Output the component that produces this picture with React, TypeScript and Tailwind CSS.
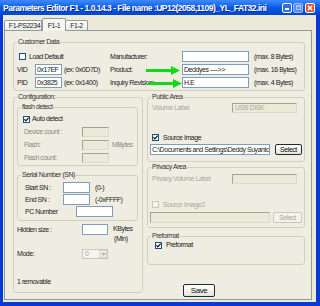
import React from "react";

type P = { className?: string; children?: React.ReactNode };

function Box({ className = "", children }: P) {
  return (
    <div
      className={`flex items-center overflow-hidden whitespace-nowrap border border-[#7F9DB9] bg-white px-[1px] text-[#222] ${className}`}
    >
      {children}
    </div>
  );
}

function DBox({ className = "", children }: P) {
  return (
    <div
      className={`flex items-center overflow-hidden whitespace-nowrap border border-[#A5A396] border-b-[#DCDAD0] border-r-[#DCDAD0] bg-[#ECE9D8] px-[2px] text-[#ACA899] ${className}`}
    >
      {children}
    </div>
  );
}

function Check({ checked = false, disabled = false }: { checked?: boolean; disabled?: boolean }) {
  return (
    <span
      className={
        disabled
          ? "flex h-[7px] w-[7px] shrink-0 items-center justify-center border border-[#C9C7BA] bg-[#F4F3EE]"
          : "flex h-[7px] w-[7px] shrink-0 items-center justify-center border border-[#1C5180] bg-white"
      }
    >
      {checked && (
        <svg width="5" height="5" viewBox="0 0 5 5">
          <path d="M0.4 2.2 L1.9 3.8 L4.6 0.7" fill="none" stroke="#1a1a1a" strokeWidth="1.2" />
        </svg>
      )}
    </span>
  );
}

function Btn({ className = "", children, disabled = false }: P & { disabled?: boolean }) {
  return (
    <div
      className={
        disabled
          ? `flex items-center justify-center rounded-[2px] border border-[#C9C7BA] bg-[#F4F3EE] text-[#ACA899] ${className}`
          : `flex items-center justify-center rounded-[2px] border border-[#1E2B3A] bg-linear-to-b from-white to-[#E6E4DA] text-[#111] ${className}`
      }
    >
      {children}
    </div>
  );
}

function Group({ legend, className = "", children }: P & { legend: string }) {
  return (
    <fieldset className={`rounded-[3px] border border-[#D0D0BF] ${className}`}>
      <legend className="ml-[3px] px-[1px] text-[7px] leading-[8px] text-[#333]">{legend}</legend>
      {children}
    </fieldset>
  );
}

function Arrow({ className = "" }: P) {
  return (
    <svg className={`absolute top-[1px] ${className}`} width="34" height="9" viewBox="0 0 34 9">
      <line x1="0" y1="4.5" x2="27" y2="4.5" stroke="#12D912" strokeWidth="3" />
      <polygon points="25,0 34,4.5 25,9" fill="#12D912" />
    </svg>
  );
}

function TitleBar() {
  return (
    <div className="flex h-[15px] items-center bg-linear-to-b from-[#3D8BFF] via-[#0A5AE6] to-[#0046D2] pl-[3px] pr-[5px]">
      <div className="min-w-0 flex-1 whitespace-nowrap text-[8.5px] font-bold leading-[10px] tracking-[-0.5px] text-white [text-shadow:1px_1px_0_#0A2A8A]">
        Parameters Editor F1 - 1.0.14.3 - File name :UP12(2058,1109)_YL_FAT32.ini
      </div>
      <div className="flex items-center gap-[1px]">
        <div className="flex h-[10px] w-[10px] items-end justify-center rounded-[2px] border border-white bg-[#2E6CF0] pb-[2px]">
          <div className="h-[2px] w-[4px] bg-white" />
        </div>
        <div className="flex h-[10px] w-[10px] items-center justify-center rounded-[2px] border border-[#9DB9F5] bg-[#5A8CF0]">
          <div className="h-[5px] w-[5px] border border-[#A8C2F8] border-t-2" />
        </div>
        <div className="ml-[1px] flex h-[10px] w-[10px] items-center justify-center rounded-[2px] border border-white bg-[#E0512B]">
          <svg width="6" height="6" viewBox="0 0 6 6">
            <path d="M0.8 0.8 L5.2 5.2 M5.2 0.8 L0.8 5.2" stroke="white" strokeWidth="1.4" />
          </svg>
        </div>
      </div>
    </div>
  );
}

export default function App() {
  return (
    <div className="flex h-[306px] w-[320px] flex-col overflow-hidden bg-[#0A3AD6] font-['Liberation_Sans',Arial,sans-serif] text-[7px] leading-[10px] tracking-[-0.45px] text-[#222]">
      <TitleBar />
      <div className="mb-[4px] ml-[3px] mr-[4px] flex flex-1 flex-col bg-[#ECE9D8]">
        {/* tabs */}
        <div className="flex h-[15px] items-end pl-[1px]">
          <div className="flex h-[10px] w-[38px] items-center justify-center rounded-t-[2px] border border-b-0 border-[#919B9C] bg-linear-to-b from-white to-[#ECEBE6] pl-[3px]">
            F1-PS2234
          </div>
          <div className="relative z-10 -mb-[1px] flex h-[13px] w-[24px] items-start justify-center rounded-t-[2px] border border-b-0 border-[#919B9C] bg-[#F7F6F1] pt-[2px]">
            F1-1
          </div>
          <div className="flex h-[10px] w-[22px] items-center justify-center rounded-t-[2px] border border-b-0 border-l-0 border-[#919B9C] bg-linear-to-b from-white to-[#ECEBE6]">
            F1-2
          </div>
        </div>
        {/* panel */}
        <div className="mb-[2px] ml-[1px] mr-[4px] flex flex-1 flex-col border border-[#919B9C] bg-[#EFEDE2] pl-[8px] pr-[6px] pt-[7px]">
          <Group legend="Customer Data" className="flex pb-[2px] pt-[5px]">
            <div className="flex w-[96px] flex-col gap-[2px]">
              <div className="flex h-[11px] items-center gap-[3px] pl-[5px]">
                <Check />
                <span>Load Default</span>
              </div>
              <div className="flex h-[11px] items-center pl-[3px]">
                <span className="w-[18px]">VID</span>
                <Box className="h-[11px] w-[27px]">0x17EF</Box>
                <span className="ml-[2px]">(ex: 0x0D7D)</span>
              </div>
              <div className="flex h-[11px] items-center pl-[3px]">
                <span className="w-[18px]">PID</span>
                <Box className="h-[11px] w-[27px]">0x3825</Box>
                <span className="ml-[2px]">(ex: 0x1400)</span>
              </div>
            </div>
            <div className="flex flex-col gap-[2px]">
              <div className="flex h-[11px] items-center">
                <span className="w-[72px]">Manufacturer:</span>
                <Box className="h-[11px] w-[67px]" />
                <span className="ml-[5px]">(max. 8 Bytes)</span>
              </div>
              <div className="flex h-[11px] items-center">
                <span className="relative w-[72px]">
                  Product:
                  <Arrow className="left-[36px]" />
                </span>
                <Box className="h-[11px] w-[67px]">Deddyes ----&gt;&gt;</Box>
                <span className="ml-[5px]">(max. 16 Bytes)</span>
              </div>
              <div className="flex h-[11px] items-center">
                <span className="relative w-[72px]">
                  Inquiry Revision:
                  <Arrow className="left-[38px]" />
                </span>
                <Box className="h-[11px] w-[67px]">H.E</Box>
                <span className="ml-[5px]">(max. 4 Bytes)</span>
              </div>
            </div>
          </Group>

          <div className="mt-[2px] flex gap-[4px]">
            {/* Configuration */}
            <Group legend="Configuration:" className="flex h-[200px] w-[130px] flex-col">
              <Group legend="flash detect" className="ml-[3px] mt-[2px] flex w-[121px] flex-col pb-[2px] pt-[3px]">
                <div className="flex h-[10px] items-center gap-[2px] pl-[5px]">
                  <Check checked />
                  <span>Auto detect</span>
                </div>
                <div className="mt-[3px] flex h-[10px] items-center pl-[6px]">
                  <span className="w-[58px] text-[#8A887E]">Device count :</span>
                  <DBox className="h-[10px] w-[27px]" />
                </div>
                <div className="mt-[3px] flex h-[10px] items-center pl-[6px]">
                  <span className="w-[58px] text-[#8A887E]">Flash:</span>
                  <DBox className="h-[10px] w-[27px]" />
                  <span className="ml-[3px] text-[#8A887E]">MBytes</span>
                </div>
                <div className="mt-[3px] flex h-[10px] items-center pl-[6px]">
                  <span className="w-[58px] text-[#8A887E]">Flash count:</span>
                  <DBox className="h-[10px] w-[27px]" />
                </div>
              </Group>
              <Group legend="Serial Number (SN)" className="ml-[3px] mt-[5px] flex w-[121px] flex-col pb-[3px] pt-[3px]">
                <div className="flex h-[11px] items-center pl-[7px]">
                  <span className="w-[38px]">Start SN :</span>
                  <Box className="h-[11px] w-[27px]" />
                  <span className="ml-[5px]">(0-)</span>
                </div>
                <div className="mt-[1px] flex h-[11px] items-center pl-[7px]">
                  <span className="w-[38px]">End SN :</span>
                  <Box className="h-[11px] w-[27px]" />
                  <span className="ml-[5px]">(-0xFFFF)</span>
                </div>
                <div className="mt-[1px] flex h-[11px] items-center pl-[7px]">
                  <span className="w-[51px]">PC Number</span>
                  <Box className="h-[11px] w-[37px]" />
                </div>
              </Group>
              <div className="mt-[3px] flex items-start pl-[3px]">
                <span className="flex h-[11px] w-[65px] items-center">Hidden size :</span>
                <Box className="h-[11px] w-[26px]" />
                <div className="ml-[5px] flex flex-col">
                  <span>KBytes</span>
                  <span className="pl-[1px]">(Min)</span>
                </div>
              </div>
              <div className="mt-[5px] flex h-[10px] items-center pl-[3px]">
                <span className="w-[65px]">Mode:</span>
                <div className="flex h-[10px] w-[26px] items-center border border-[#C9C7BA] bg-[#F4F3EE]">
                  <span className="flex-1 pl-[2px] text-[#ACA899]">0</span>
                  <div className="flex h-[8px] w-[8px] items-center justify-center border border-[#D8D6CC] bg-[#EEEDE5]">
                    <svg width="5" height="3" viewBox="0 0 5 3">
                      <path d="M0 0 L2.5 3 L5 0 Z" fill="#B5B3A8" />
                    </svg>
                  </div>
                </div>
              </div>
              <div className="mt-[18px] pl-[3px]">1 removable</div>
            </Group>

            {/* right column */}
            <div className="flex w-[158px] flex-col">
              <Group legend="Public Area" className="flex flex-col pb-[6px] pt-[2px]">
                <div className="flex h-[10px] items-center pl-[4px]">
                  <span className="w-[80px] text-[#ACA899]">Volume Label</span>
                  <DBox className="h-[10px] w-[65px]">USB DISK</DBox>
                </div>
                <div className="mt-[20px] flex h-[9px] items-center gap-[4px] pl-[4px]">
                  <Check checked />
                  <span>Source Image</span>
                </div>
                <div className="mt-[2px] flex h-[11px] items-center pl-[2px]">
                  <Box className="h-[11px] w-[120px]">C:\Documents and Settings\Deddy Suyanto</Box>
                  <Btn className="ml-[5px] h-[11px] w-[27px]">Select</Btn>
                </div>
              </Group>
              <Group legend="Privacy Area" className="mt-[1px] flex flex-col pb-[4px] pt-[3px]">
                <div className="flex h-[10px] items-center pl-[4px]">
                  <span className="w-[80px] text-[#ACA899]">Privacy Volume Label</span>
                  <DBox className="h-[10px] w-[65px]" />
                </div>
                <div className="mt-[16px] flex h-[9px] items-center gap-[4px] pl-[4px]">
                  <Check disabled />
                  <span className="text-[#ACA899]">Source Image2</span>
                </div>
                <div className="mt-[3px] flex h-[11px] items-center pl-[2px]">
                  <DBox className="h-[11px] w-[120px]" />
                  <Btn disabled className="ml-[3px] h-[11px] w-[29px]">Select</Btn>
                </div>
              </Group>
              <Group legend="Preformat" className="mt-[4px] flex flex-col pb-[15px] pt-[1px]">
                <div className="flex h-[8px] items-center gap-[4px] pl-[7px]">
                  <Check checked />
                  <span>Preformat</span>
                </div>
              </Group>
              <Btn className="ml-[36px] mt-[19px] h-[13px] w-[32px] text-[8px]">Save</Btn>
            </div>
          </div>
        </div>
      </div>
    </div>
  );
}
